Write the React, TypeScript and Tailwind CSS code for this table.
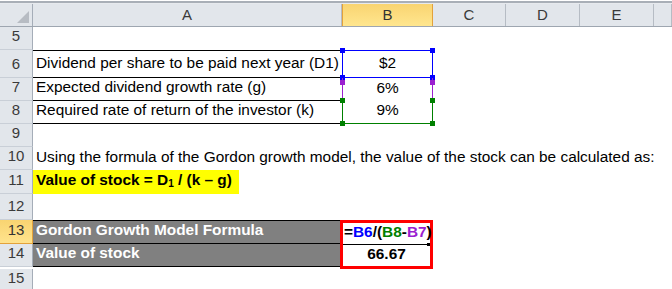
import React from 'react'

const COLS = [309, 91, 73, 74, 74, 18]
const LETTERS = ['A', 'B', 'C', 'D', 'E', '']

const font = { fontFamily: '"Liberation Sans", Arial, sans-serif' }

function RowHead({ n, h, active }: { n: number; h: string; active?: boolean }) {
  return (
    <div
      className={`flex w-[33px] shrink-0 items-end justify-center border-r pb-[2px] text-[15px] ${h} ${
        active
          ? 'border-b border-r-[#e3a23b] border-b-[#e3a23b] bg-gradient-to-b from-[#f9d471] to-[#ffe38d] text-[#333]'
          : 'border-b border-r-[#a5adb8] border-b-[#c9cfd7] bg-[#e2e6eb] text-[#3a3a3a]'
      }`}
    >
      {n}
    </div>
  )
}

function Handle({ pos, color }: { pos: string; color: string }) {
  return <span className={`absolute h-[5px] w-[5px] ${pos} ${color}`} />
}

export default function App() {
  return (
    <div className="h-[289px] w-[672px] overflow-hidden bg-white text-[15.4px] text-black" style={font}>
      {/* top strip */}
      <div className="h-[4px] border-t border-t-white bg-[#e7eaee]">
        <div className="h-[2px] bg-[#a9afb7]" />
      </div>

      {/* column header */}
      <div className="flex h-[23px] border-b border-[#9ea6b0] bg-[#e2e6eb]">
        <div className="relative w-[33px] shrink-0 border-r border-[#a5adb8]">
          <svg className="absolute bottom-[3px] right-[3px]" width="12" height="12" viewBox="0 0 12 12">
            <polygon points="12,0 12,12 0,12" fill="#b7bcc3" />
          </svg>
        </div>
        {COLS.map((w, i) => (
          <div
            key={i}
            style={{ width: w }}
            className={`flex shrink-0 items-center justify-center text-[15px] ${
              i === 1
                ? 'border-x border-[#e3a23b] bg-gradient-to-b from-[#f9d471] to-[#ffe68e] text-[#333]'
                : 'border-r border-[#b6bcc4] text-[#3a3a3a]'
            }`}
          >
            {LETTERS[i]}
          </div>
        ))}
      </div>

      {/* row 5 */}
      <div className="flex">
        <RowHead n={5} h="h-[23px]" />
      </div>

      {/* rows 6-8 */}
      <div className="flex">
        <RowHead n={6} h="h-[28px]" />
        <div className="flex h-[28px] w-[309px] items-end whitespace-nowrap border-y border-black pb-[3px] pl-[3px]">
          Dividend per share to be paid next year (D1)
        </div>
        <div className="relative flex h-[28px] w-[91px] items-end justify-center border border-[#0000ff] pb-[3px]">
          $2
          <Handle pos="-left-[3px] -top-[3px]" color="bg-[#0000ff]" />
          <Handle pos="-right-[3px] -top-[3px]" color="bg-[#0000ff]" />
          <Handle pos="-left-[3px] -bottom-[3px]" color="bg-[#0000ff]" />
          <Handle pos="-right-[3px] -bottom-[3px]" color="bg-[#0000ff]" />
        </div>
      </div>
      <div className="flex">
        <RowHead n={7} h="h-[23px]" />
        <div className="flex h-[23px] w-[309px] items-end whitespace-nowrap border-b border-black pb-[2px] pl-[3px]">
          Expected dividend growth rate (g)
        </div>
        <div className="relative flex h-[23px] w-[91px] items-end justify-center border-x border-[#9b1fd0] pb-[2px]">
          6%
          <Handle pos="-left-[3px] top-[2px]" color="bg-[#9b1fd0]" />
          <Handle pos="-right-[3px] top-[2px]" color="bg-[#9b1fd0]" />
        </div>
      </div>
      <div className="flex">
        <RowHead n={8} h="h-[23px]" />
        <div className="flex h-[23px] w-[309px] items-end whitespace-nowrap border-b border-black pb-[2px] pl-[3px]">
          Required rate of return of the investor (k)
        </div>
        <div className="relative flex h-[23px] w-[91px] items-end justify-center border-x border-b border-[#008000] pb-[2px]">
          9%
          <Handle pos="-left-[3px] -top-[3px]" color="bg-[#008000]" />
          <Handle pos="-right-[3px] -top-[3px]" color="bg-[#008000]" />
          <Handle pos="-left-[3px] -bottom-[3px]" color="bg-[#008000]" />
          <Handle pos="-right-[3px] -bottom-[3px]" color="bg-[#008000]" />
        </div>
      </div>

      {/* row 9 */}
      <div className="flex">
        <RowHead n={9} h="h-[23px]" />
      </div>

      {/* row 10 */}
      <div className="flex">
        <RowHead n={10} h="h-[23px]" />
        <div className="flex h-[23px] items-end whitespace-nowrap pb-[2px] pl-[3px]">
          Using the formula of the Gordon growth model, the value of the stock can be calculated as:
        </div>
      </div>

      {/* row 11 */}
      <div className="flex">
        <RowHead n={11} h="h-[24px]" />
        <div className="flex h-[24px] w-[206px] items-end whitespace-nowrap bg-[#ffff00] pb-[3px] pl-[3px] font-bold">
          <span>
            Value of stock = D<sub className="text-[10px]">1</sub> / (k – g)
          </span>
        </div>
      </div>

      {/* row 12 */}
      <div className="flex">
        <RowHead n={12} h="h-[26px]" />
      </div>

      {/* rows 13-14 */}
      <div className="flex">
        <div className="flex flex-col">
          <RowHead n={13} h="h-[24px]" active />
          <RowHead n={14} h="h-[23px]" />
        </div>
        <div className="flex w-[307px] flex-col border-t border-black">
          <div className="flex h-[23px] items-end whitespace-nowrap border-b border-black bg-[#808080] pb-[2px] pl-[3px] font-bold text-white">
            Gordon Growth Model Formula
          </div>
          <div className="flex h-[23px] items-end whitespace-nowrap border-b border-black bg-[#808080] pb-[2px] pl-[3px] font-bold text-white">
            Value of stock
          </div>
        </div>
        <div className="flex w-[93px] flex-col border-[3px] border-[#ff0000] font-bold">
          <div className="relative flex h-[22px] items-end whitespace-nowrap border-b border-black pb-[1px] pl-[1px]">
            <span>
              =<span className="text-[#0000ff]">B6</span>/(<span className="text-[#008000]">B8</span>-
              <span className="text-[#9b1fd0]">B7</span>)
            </span>
            <span className="absolute -bottom-[2px] right-0 h-[3px] w-[3px] bg-black" />
          </div>
          <div className="flex h-[21px] items-end justify-center pb-[1px]">66.67</div>
        </div>
      </div>

      {/* row 15 */}
      <div className="flex">
        <RowHead n={15} h="h-[23px]" />
      </div>
    </div>
  )
}
